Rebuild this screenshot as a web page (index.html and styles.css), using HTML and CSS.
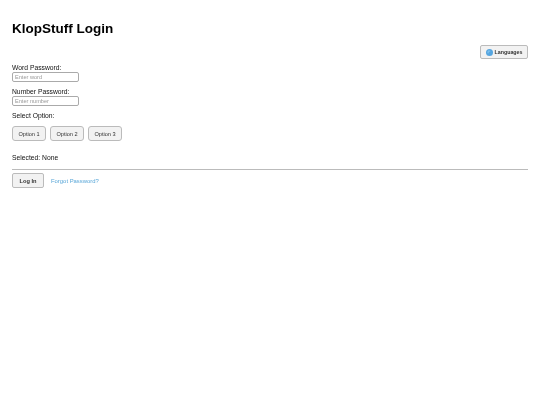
FILE: index.html
```html
<!DOCTYPE html>
<html lang="en">
<head>
  <meta charset="UTF-8">
  <title>KlopStuff Login</title>
  <link rel="stylesheet" href="styles.css">
</head>
<body>
  <div class="container">
    <h1>KlopStuff Login</h1>

    <div class="lang-row">
      <button class="lang-btn">
        <svg class="globe" viewBox="0 0 10 10" width="7" height="7"><circle cx="5" cy="5" r="5" fill="#55a5e0"/><path d="M3 2h3v2H4v2H2V4z" fill="#7cc0ee"/></svg>
        Languages
      </button>
    </div>

    <label for="word">Word Password:</label>
    <input type="text" id="word" placeholder="Enter word">

    <label for="number">Number Password:</label>
    <input type="text" id="number" placeholder="Enter number">

    <p class="select-label">Select Option:</p>
    <div class="options">
      <button class="opt-btn">Option 1</button>
      <button class="opt-btn">Option 2</button>
      <button class="opt-btn">Option 3</button>
    </div>

    <p class="selected">Selected: None</p>
    <hr>

    <div class="footer-row">
      <button class="login-btn">Log In</button>
      <a class="forgot" href="#">Forgot Password?</a>
    </div>
  </div>
</body>
</html>
```

FILE: styles.css
```css
body {
  font-family: "Liberation Sans", Arial, sans-serif;
  background: #fff;
  color: #111;
  margin: 0;
  padding: 0;
}
.container {
  padding: 20px 12px 0;
  will-change: transform;
}
h1 {
  font-size: 13.5px;
  line-height: 17px;
  margin: 0;
  color: #000;
}
.lang-row {
  display: flex;
  justify-content: flex-end;
  margin-top: 8px;
  height: 19px;
}
.lang-btn {
  display: flex;
  align-items: center;
  gap: 1.5px;
  width: 48px;
  height: 14px;
  padding: 0 0 0 5px;
  font-family: inherit;
  font-size: 5.3px;
  font-weight: bold;
  color: #333;
  background: #f2f2f2;
  border: 1px solid #bbb;
  border-radius: 2px;
}
label {
  display: block;
  font-size: 6.75px;
  line-height: 8px;
  color: #111;
}
input {
  display: block;
  box-sizing: border-box;
  width: 67px;
  height: 10px;
  margin: 0 0 6px;
  padding: 0 2px;
  font-family: inherit;
  font-size: 5.6px;
  border: 1px solid #aaa;
  border-radius: 2px;
}
input::placeholder {
  color: #999;
}
.select-label {
  font-size: 6.75px;
  line-height: 8px;
  margin: 0 0 6px;
  color: #111;
}
.options {
  display: flex;
  gap: 4px;
}
.opt-btn {
  width: 34px;
  height: 15px;
  padding: 0;
  font-family: inherit;
  font-size: 5.6px;
  color: #333;
  background: #f2f2f2;
  border: 1px solid #bbb;
  border-radius: 3px;
}
.selected {
  font-size: 6.75px;
  line-height: 8px;
  margin: 13px 0 7px;
  color: #111;
}
hr {
  margin: 0 0 3px;
  border: none;
  border-top: 1px solid #bbb;
}
.footer-row {
  display: flex;
  align-items: center;
  gap: 7px;
}
.login-btn {
  width: 32px;
  height: 15px;
  padding: 0;
  font-family: inherit;
  font-size: 5.7px;
  font-weight: bold;
  color: #333;
  background: #f2f2f2;
  border: 1px solid #bbb;
  border-radius: 2px;
}
.forgot {
  font-size: 5.9px;
  color: #5aa7d8;
  text-decoration: none;
}
```
